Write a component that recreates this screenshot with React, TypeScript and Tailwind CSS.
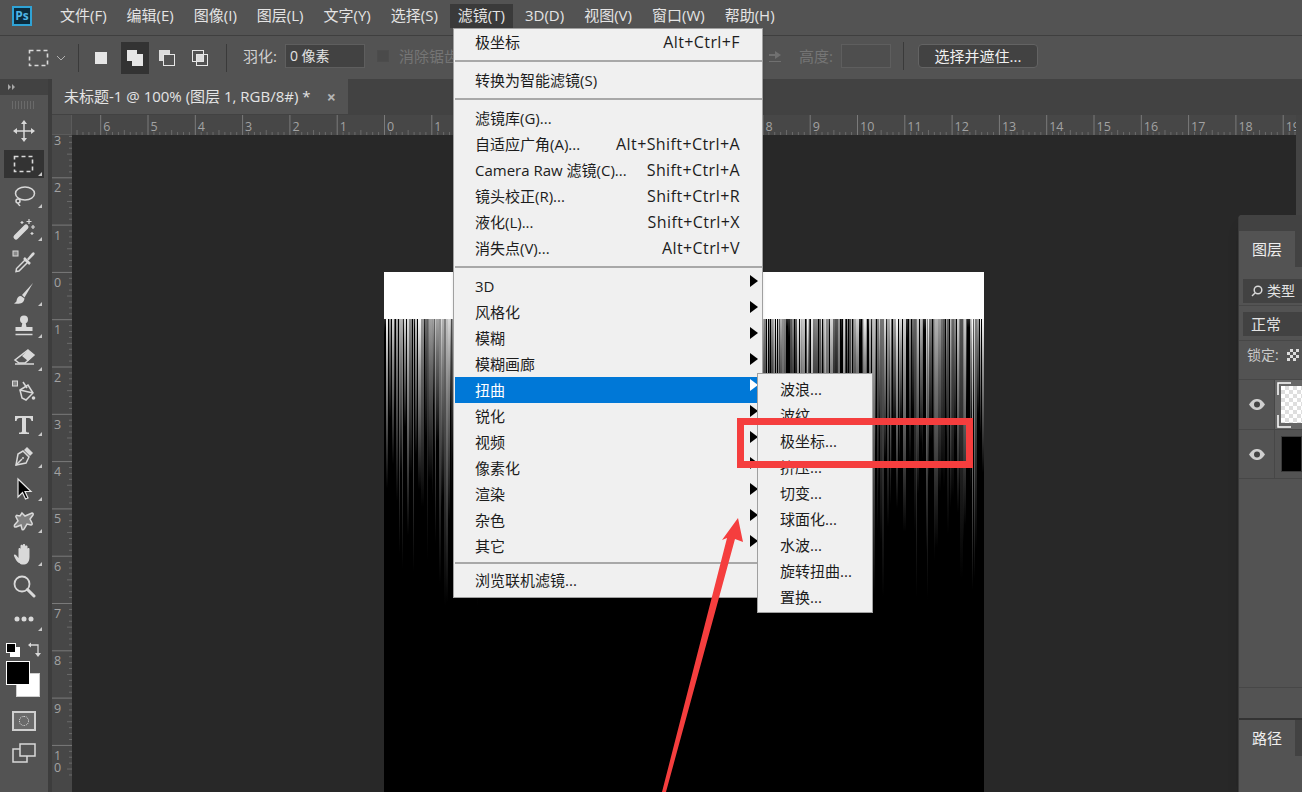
import React from "react";

const menuTop = [
  { t: "文件(F)" }, { t: "编辑(E)" }, { t: "图像(I)" }, { t: "图层(L)" }, { t: "文字(Y)" }, { t: "选择(S)" },
  { t: "滤镜(T)", on: true }, { t: "3D(D)" }, { t: "视图(V)" }, { t: "窗口(W)" }, { t: "帮助(H)" },
];

type Row = { t?: string; k?: string; sub?: boolean; on?: boolean; sep?: "lg" | "sm" };
const filterMenu: Row[] = [
  { t: "极坐标", k: "Alt+Ctrl+F" },
  { sep: "lg" },
  { t: "转换为智能滤镜(S)" },
  { sep: "lg" },
  { t: "滤镜库(G)..." },
  { t: "自适应广角(A)...", k: "Alt+Shift+Ctrl+A" },
  { t: "Camera Raw 滤镜(C)...", k: "Shift+Ctrl+A" },
  { t: "镜头校正(R)...", k: "Shift+Ctrl+R" },
  { t: "液化(L)...", k: "Shift+Ctrl+X" },
  { t: "消失点(V)...", k: "Alt+Ctrl+V" },
  { sep: "lg" },
  { t: "3D", sub: true },
  { t: "风格化", sub: true },
  { t: "模糊", sub: true },
  { t: "模糊画廊", sub: true },
  { t: "扭曲", sub: true, on: true },
  { t: "锐化", sub: true },
  { t: "视频", sub: true },
  { t: "像素化", sub: true },
  { t: "渲染", sub: true },
  { t: "杂色", sub: true },
  { t: "其它", sub: true },
  { sep: "sm" },
  { t: "浏览联机滤镜..." },
];
const distort = ["波浪...", "波纹...", "极坐标...", "挤压...", "切变...", "球面化...", "水波...", "旋转扭曲...", "置换..."];

let seed = 23;
const rnd = () => {
  seed = (seed * 16807) % 2147483647;
  return seed / 2147483647;
};
const streaks: { x: number; w: number; len: number; op: number }[] = [];
for (let x = 0; x < 600; ) {
  const w = 1 + Math.floor(rnd() * 2.4);
  const r = rnd();
  const len = r < 0.1 ? 8 + rnd() * 20 : r < 0.7 ? 80 + rnd() * 110 : 170 + rnd() * 120;
  const op = r < 0.1 ? 0.2 : 0.3 + rnd() * 0.7;
  streaks.push({ x, w, len, op });
  x += w + (rnd() < 0.22 ? 1 : 0);
}

const I = "#d9d9d9";

function Ico({ children, w = 24, h = 24 }: { children: React.ReactNode; w?: number; h?: number }) {
  return (
    <svg width={w} height={h} viewBox={`0 0 ${w} ${h}`} fill="none" stroke={I} strokeWidth="1.5">
      {children}
    </svg>
  );
}

const Marquee = () => (
  <Ico w={22} h={18}>
    <rect x="1.5" y="1.5" width="18" height="15" strokeDasharray="4 3" strokeWidth="1.6" />
  </Ico>
);

const tools: { el: React.ReactNode; on?: boolean; corner?: boolean }[] = [
  {
    el: (
      <Ico>
        <path d="M12 3v18M3 12h18" />
        <path d="M12 1l3 4H9zM12 23l3-4H9zM1 12l4-3v6zM23 12l-4-3v6z" fill={I} stroke="none" />
      </Ico>
    ),
  },
  { el: <Marquee />, on: true, corner: true },
  {
    el: (
      <Ico>
        <ellipse cx="13" cy="9.500" rx="9.500" ry="6.500" />
        <circle cx="6" cy="17" r="2" />
        <path d="M6 19c0 1.500 1.500 2 2 3" />
      </Ico>
    ),
    corner: true,
  },
  {
    el: (
      <Ico>
        <path d="M4 20L14 10" strokeWidth="5" strokeLinecap="round" />
        <path d="M17 2v5M14.500 4.500h5M21 8v4M19 10h4M10 4v3M8.500 5.500h3M20 15v3M18.500 16.500h3" strokeWidth="1.200" />
      </Ico>
    ),
    corner: true,
  },
  {
    el: (
      <svg width="24" height="24" viewBox="0 0 24 24" fill="none" stroke={I} strokeWidth="1.500">
        <rect x="1" y="2" width="5" height="5" strokeWidth="1" fill="#8a8a8a" />
        <path d="M7 22l-3 .5.5-3L13 11l2.500 2.500z" />
        <path d="M12 9l6 6" strokeWidth="2.500" />
        <path d="M15 10l5-6c1-1 2-1 2.500 0s0 1.500-1 2.500l-5 5z" fill={I} stroke="none" />
      </svg>
    ),
  },
  {
    el: (
      <Ico>
        <path d="M21 1L10 13l2.500 2.500z" fill={I} stroke="none" />
        <path d="M9 14c-3 0-4 2-4.500 5-.2 1-1 1.500-2.500 2.500 5 1 10 0 10.500-5z" fill={I} stroke="none" />
      </Ico>
    ),
    corner: true,
  },
  {
    el: (
      <Ico>
        <circle cx="12" cy="5.500" r="4" fill={I} stroke="none" />
        <path d="M10.500 8h3l1 5h6v4H3.500v-4h6z" fill={I} stroke="none" />
        <path d="M3.500 20.500h17" />
      </Ico>
    ),
    corner: true,
  },
  {
    el: (
      <Ico>
        <path d="M16 3l6 5-9 8H7l-4-3z" />
        <path d="M16 3l6 5-6 6-6-5z" fill={I} stroke="none" />
        <path d="M3 17h19" />
      </Ico>
    ),
    corner: true,
  },
  {
    el: (
      <Ico>
        <rect x="0.500" y="2" width="5" height="5" strokeWidth="1" fill="#8a8a8a" />
        <path d="M8 11l8-5 5 8-7 7-4-2z" />
        <path d="M8 11l13 3" />
        <path d="M11 3l4 6" />
        <circle cx="21.500" cy="19" r="1.800" fill={I} stroke="none" />
      </Ico>
    ),
  },
  {
    el: (
      <Ico>
        <path d="M3 4h18v5h-1.500c-.5-2-1-3-3-3H14v13c0 1 1 1.500 3 1.500V22H7v-1.500c2 0 3-.5 3-1.500V6H7.500c-2 0-2.500 1-3 3H3z" fill={I} stroke="none" />
      </Ico>
    ),
    corner: true,
  },
  {
    el: (
      <Ico>
        <path d="M15 3l6 6-3 3-6-6z" fill={I} stroke="none" />
        <path d="M11 7l6 6-3 6-10 2 2-11z" />
        <path d="M4 21l6-6" />
        <circle cx="11" cy="14" r="1" fill={I} stroke="none" />
      </Ico>
    ),
    corner: true,
  },
  {
    el: (
      <svg width="24" height="24" viewBox="0 0 24 24">
        <path d="M6 2v18l4.500-4.500 3 6.500 2.500-1-3-6.500H19z" fill="#000" stroke="#e5e5e5" strokeWidth="1.200" />
      </svg>
    ),
    corner: true,
  },
  {
    el: (
      <Ico>
        <path d="M10 4l3 3 7-3c1 0 1.500 1 1 2l-3 4 2 4c.5 1 0 2-1 2l-4-1-3 5c-.5 1-2 1-2 0l-1-4-5 2c-1.500.5-2-1-1.500-2L6 12 4 8c-.5-1 .5-2 1.500-1.500L8 7z" fill="#808080" />
      </Ico>
    ),
    corner: true,
  },
  {
    el: (
      <svg width="24" height="24" viewBox="0 0 24 24" fill={I}>
        <path d="M7 21c-2-1-3-3-5-7-.5-1.500 1-2 2-1l2.500 3V7c0-1.500 2-1.500 2 0V3.800c0-1.500 2.300-1.500 2.300 0v-.6c0-1.500 2.400-1.500 2.400 0v1.300c0-1.400 2.300-1.400 2.300 0V7c0-1.300 2-1.300 2 0v8c0 3-1 5-2 6-2 2-7 2-8 0z" />
      </svg>
    ),
    corner: true,
  },
  {
    el: (
      <Ico>
        <circle cx="10" cy="10" r="7.500" strokeWidth="1.800" />
        <path d="M15.500 15.500L22 22" strokeWidth="3" strokeLinecap="round" />
      </Ico>
    ),
  },
  {
    el: (
      <svg width="24" height="24" viewBox="0 0 24 24" fill={I}>
        <circle cx="5" cy="12" r="2.500" />
        <circle cx="12" cy="12" r="2.500" />
        <circle cx="19" cy="12" r="2.500" />
      </svg>
    ),
    corner: true,
  },
];

function Arrow({ white }: { white?: boolean }) {
  return (
    <svg width="8" height="12" viewBox="0 0 8 12" className="absolute right-1 top-0.5">
      <path d="M0 0l8 6-8 6z" fill={white ? "#fff" : "#000"} />
    </svg>
  );
}

const rulerFont = "Open Sans, sans-serif";

function TopRuler() {
  // numbers 2-7 lie under the open menu, so only the visible ones are written
  const nums = Array.from({ length: 26 }, (_, i) => i - 6).filter((n) => n < 2 || n > 7);
  const ticks = Array.from({ length: 215 }, (_, i) => i - 52);
  return (
    <svg className="h-5 flex-1" height="20" viewBox="0 0 1224 20" preserveAspectRatio="xMinYMin slice">
      {ticks.map((i) => {
        const x = 312 + (i * 47.3) / 8;
        const major = i % 8 === 0;
        const mid = i % 4 === 0;
        return <rect key={i} x={x} y={major ? 0 : mid ? 15 : 17} width="1" height={major ? 20 : mid ? 5 : 3} fill={major ? "#7a7a7a" : "#6a6a6a"} />;
      })}
      {nums.map((n) => (
        <text key={n} x={312 + n * 47.3 + 3} y="16" fontSize="12.500" fill="#a2a2a2" fontFamily={rulerFont}>
          {Math.abs(n)}
        </text>
      ))}
    </svg>
  );
}

function LeftRuler() {
  const rows = [3, 2, 1, 0, 1, 2, 3, 4, 5, 6, 7, 8, 9, 10];
  const ticks = Array.from({ length: 110 }, (_, i) => i);
  return (
    <svg width="20" height="657" viewBox="0 0 20 657" className="shrink-0">
      {ticks.map((i) => {
        const y = (i * 47.3) / 8 - 5;
        const major = i % 8 === 0;
        const mid = i % 4 === 0;
        return <rect key={i} x={major ? 0 : mid ? 15 : 17} y={y} width={major ? 20 : mid ? 5 : 3} height="1" fill={major ? "#7a7a7a" : "#6a6a6a"} />;
      })}
      {rows.map((n, i) =>
        n === 10 ? (
          <g key={i}>
            <text x="2" y={i * 47.3 + 10} fontSize="12.500" fill="#a2a2a2" fontFamily={rulerFont}>1</text>
            <text x="2" y={i * 47.3 + 22} fontSize="12.500" fill="#a2a2a2" fontFamily={rulerFont}>0</text>
          </g>
        ) : (
          <text key={i} x="2" y={i * 47.3 + 10} fontSize="12.500" fill="#a2a2a2" fontFamily={rulerFont}>{n}</text>
        )
      )}
    </svg>
  );
}

function Eye() {
  return (
    <svg width="16" height="11" viewBox="0 0 16 11">
      <path d="M0 5.500C3 1 5.500 0 8 0s5 1 8 5.500C13 10 10.500 11 8 11S3 10 0 5.500z" fill="#cfcfcf" />
      <circle cx="8" cy="5.500" r="3" fill="#444" />
    </svg>
  );
}

export default function App() {
  return (
    <div className="relative flex h-screen flex-col overflow-hidden bg-[#535353] font-['Open_Sans','Noto_Sans_CJK_SC',sans-serif] text-[15px] text-[#e4e4e4]">
      {/* menu bar */}
      <div className="flex h-9 shrink-0 items-center border-b border-[#3f3f3f] pb-1">
        <div className="ml-3 mr-5 flex h-5 w-5 items-center justify-center border-2 border-[#2fa3d6] bg-[#0b2b3d] text-xs font-bold leading-none text-[#4fb6e6]">
          Ps
        </div>
        <div className="flex gap-1">
          {menuTop.map((m) => (
            <span key={m.t} className={`flex h-6 items-center px-2 ${m.on ? "bg-[#3a3a3a]" : ""}`}>
              {m.t}
            </span>
          ))}
        </div>
      </div>

      {/* options bar */}
      <div className="-mb-px flex h-11 shrink-0 items-center bg-[#535353]">
        <div className="ml-7 flex items-center">
          <Marquee />
        </div>
        <svg width="10" height="6" viewBox="0 0 10 6" fill="none" stroke="#b0b0b0" className="ml-1.5">
          <path d="M1 1l4 4 4-4" />
        </svg>
        <div className="ml-3 h-7 w-px bg-[#3a3a3a]" />
        <div className="ml-1.5 flex h-8 w-8 items-center justify-center">
          <div className="h-3 w-3 bg-[#e6e6e6]" />
        </div>
        <div className="ml-1 flex h-8 w-7 items-center justify-center bg-[#333333]">
          <svg width="18" height="18" viewBox="0 0 18 18" fill="#e6e6e6">
            <path d="M1 1h10v4h6v12H6v-5H1z" />
          </svg>
        </div>
        <div className="ml-0.5 flex h-8 w-8 items-center justify-center">
          <svg width="18" height="18" viewBox="0 0 18 18">
            <rect x="1" y="1" width="11" height="11" fill="#dcdcdc" />
            <rect x="5.500" y="5.500" width="11" height="11" fill="#535353" stroke="#e6e6e6" />
          </svg>
        </div>
        <div className="ml-px flex h-8 w-8 items-center justify-center">
          <svg width="18" height="18" viewBox="0 0 18 18" fill="none" stroke="#e6e6e6">
            <rect x="1.500" y="1.500" width="11" height="11" />
            <rect x="5.500" y="5.500" width="11" height="11" />
            <rect x="5.500" y="5.500" width="7" height="7" fill="#dcdcdc" />
          </svg>
        </div>
        <div className="ml-2.5 h-7 w-px bg-[#3a3a3a]" />
        <span className="mb-1 ml-4 text-[#d0d0d0]">羽化:</span>
        <div className="mb-1 ml-2 flex h-6 w-20 items-center border border-[#5e5e5e] bg-[#424242] px-1 text-sm text-[#e4e4e4]">0 像素</div>
        <div className="mb-1 ml-3 h-3 w-3 border border-[#4c4c4c] bg-[#4a4a4a]" />
        <span className="mb-1 ml-2.5 text-[#757575]">消除锯齿</span>
        <div className="flex-1" />
        <svg width="14" height="14" viewBox="0 0 14 14" fill="#707070" className="mb-1 mr-4">
          <path d="M0 5h6V2l6 4-6 4V7H0zM0 12h12v1H0z" />
        </svg>
        <span className="mb-1 text-[#757575]">高度:</span>
        <div className="mb-1 ml-2 h-6 w-12.5 border border-[#5e5e5e] bg-[#4e4e4e]" />
        <div className="mb-1 ml-3 h-7 w-px bg-[#3a3a3a]" />
        <div className="mb-1 ml-3.5 flex h-6 w-30 items-center justify-center rounded-sm border border-[#636363] bg-[#424242] text-[#f0f0f0]">
          选择并遮住...
        </div>
        <div className="w-66" />
      </div>

      <div className="flex min-h-0 flex-1">
        {/* tool column */}
        <div className="flex w-13 shrink-0 flex-col border-r-4 border-[#3d3d3d]">
          <div className="flex h-4 items-center bg-[#424242] pl-2 text-[#9a9a9a]">
            <svg width="8" height="6" viewBox="0 0 8 6" fill="#a8a8a8">
              <path d="M0 0l3 3-3 3zM4 0l3 3-3 3z" />
            </svg>
          </div>
          <div className="flex h-5 items-center justify-center">
            <div className="h-2 w-6 bg-[repeating-linear-gradient(90deg,#6a6a6a_0_1px,transparent_1px_3px)]" />
          </div>
          <div className="flex h-130 flex-col items-center justify-between">
            {tools.map((t, i) => (
              <div key={i} className="relative flex h-8 w-10 items-center justify-center">
                {t.on && <div className="absolute inset-x-0 inset-y-0.5 bg-[#333333]" />}
                <div className="relative flex">{t.el}</div>
                {t.corner && <div className="absolute bottom-1 right-0.5 h-0 w-0 border-b-4 border-l-4 border-b-[#c8c8c8] border-l-transparent" />}
              </div>
            ))}
          </div>
          {/* colours */}
          <div className="relative mt-1.5 h-16">
            <div className="absolute left-2.5 top-1.5 h-2.5 w-2.5 bg-white" />
            <div className="absolute left-1.5 top-0.5 h-2.5 w-2.5 border border-white bg-black" />
            <svg width="14" height="16" viewBox="0 0 14 16" fill="none" stroke="#d8d8d8" strokeWidth="1.300" className="absolute left-7 top-0">
              <path d="M2 4h8v8" />
              <path d="M0 4l3-2.500v5zM10 16l-3-4h6z" fill="#d8d8d8" stroke="none" />
            </svg>
            <div className="absolute left-4 top-8 h-6 w-6 border border-[#cfcfcf] bg-white" />
            <div className="absolute left-1.5 top-5 h-6 w-6 border border-white bg-black" />
          </div>
          <div className="flex h-8 flex-col items-center justify-center">
            <div className="flex h-5 w-6 items-center justify-center border-2 border-[#cfcfcf] bg-[#6a6a6a]">
              <div className="h-2.5 w-2.5 rounded-full border border-dotted border-[#e5e5e5]" />
            </div>
          </div>
          <div className="relative flex h-8 items-center justify-center">
            <svg width="24" height="20" viewBox="0 0 24 20" fill="none" stroke="#d8d8d8" strokeWidth="1.500">
              <rect x="1" y="6" width="14" height="13" />
              <rect x="8" y="1" width="15" height="12" fill="#535353" />
            </svg>
          </div>
        </div>

        {/* document area */}
        <div className="flex min-w-0 flex-1 flex-col">
          <div className="flex h-9 shrink-0 bg-[#424242]">
            <div className="flex h-full w-74 items-center justify-between border-b border-[#424242] bg-[#535353] pl-3 pr-3">
              <span className="whitespace-nowrap">未标题-1 @ 100% (图层 1, RGB/8#) *</span>
              <span className="text-base font-bold leading-none text-[#b5b5b5]">×</span>
            </div>
          </div>
          <div className="flex min-h-0 flex-1">
            <div className="flex min-w-0 flex-1 flex-col">
              <div className="flex h-5 shrink-0 bg-[#474747]">
                <div className="h-5 w-5 border-b border-r border-[#5b5b5b] bg-[#4f4f4f]" />
                <TopRuler />
              </div>
              <div className="flex min-h-0 flex-1">
                <div className="w-5 shrink-0 overflow-hidden bg-[#474747]">
                  <LeftRuler />
                </div>
                <div className="relative min-w-0 flex-1 overflow-hidden bg-[#282828]">
                  <div className="absolute left-78 top-[137px] h-130 w-150 bg-black">
                    <svg width="600" height="520" viewBox="0 0 600 520">
                      <defs>
                        <linearGradient id="fade" x1="0" y1="0" x2="0" y2="1">
                          <stop offset="0" stopColor="#fff" />
                          <stop offset="0.3" stopColor="#a0a0a0" />
                          <stop offset="1" stopColor="#000" />
                        </linearGradient>
                      </defs>
                      <rect width="600" height="47" fill="#fff" />
                      {streaks.map((s) => (
                        <rect key={s.x} x={s.x} y="46" width={s.w} height={s.len} fill="url(#fade)" opacity={s.op} />
                      ))}
                    </svg>
                  </div>
                </div>
              </div>
            </div>
            <div className="w-1.5 shrink-0 bg-[#444444]" />
          </div>
        </div>
      </div>

      {/* layers panel */}
      <div className="absolute bottom-0 right-0 top-[215px] flex w-16 flex-col overflow-hidden rounded-tl-sm border-l border-[#3a3a3a] bg-[#535353] shadow-lg">
        <div className="h-4 shrink-0 bg-[#424242]" />
        <div className="flex h-9 shrink-0 bg-[#424242]">
          <div className="flex w-14 shrink-0 items-center justify-center bg-[#535353] text-[#eeeeee]">图层</div>
        </div>
        <div className="ml-1 mt-3 flex h-6 shrink-0 items-center gap-1 whitespace-nowrap bg-[#424242] pl-2 text-sm">
          <svg width="12" height="12" viewBox="0 0 12 12" fill="none" stroke="#d8d8d8" strokeWidth="1.500" className="shrink-0">
            <circle cx="7" cy="5" r="3.800" />
            <path d="M4 8l-3 3" />
          </svg>
          类型
        </div>
        <div className="mt-0.5 h-px shrink-0 bg-[#474747]" />
        <div className="ml-1 mt-1.5 flex h-6 shrink-0 items-center bg-[#424242] pl-2">正常</div>
        <div className="mt-1 h-px shrink-0 bg-[#474747]" />
        <div className="mt-1 flex h-5 shrink-0 items-center gap-2 whitespace-nowrap pl-2 text-sm text-[#c8c8c8]">
          锁定:
          <div className="h-3 w-3 shrink-0 bg-[conic-gradient(#ddd_25%,#555_0_50%,#ddd_0_75%,#555_0)] bg-size-[6px_6px]" />
        </div>
        <div className="mt-3.5 flex h-12.5 shrink-0 border-t border-[#474747]">
          <div className="flex w-9 shrink-0 items-center justify-center border-r border-[#474747]">
            <Eye />
          </div>
          <div className="relative flex-1 bg-[#666666] py-1.5 pl-1.5">
            <div className="h-full bg-[repeating-conic-gradient(#dedede_0_25%,#fff_0_50%)] bg-size-[8px_8px]" />
            <svg width="20" height="46" viewBox="0 0 20 46" fill="none" stroke="#fff" strokeWidth="1.500" className="absolute left-0.5 top-0.5">
              <path d="M14 1H1v12M14 45H1V33" />
            </svg>
          </div>
        </div>
        <div className="flex h-12.5 shrink-0 border-y border-[#474747]">
          <div className="flex w-9 shrink-0 items-center justify-center border-r border-[#474747]">
            <Eye />
          </div>
          <div className="flex-1 py-1.5 pl-1.5">
            <div className="h-full border border-[#3a3a3a] bg-black" />
          </div>
        </div>
        <div className="mt-52 h-px shrink-0 bg-[#474747]" />
        <div className="mt-7.5 h-0.5 shrink-0 bg-[#333333]" />
        <div className="flex h-9 shrink-0 bg-[#424242]">
          <div className="flex w-14 shrink-0 items-center justify-center bg-[#535353] text-[#eeeeee]">路径</div>
        </div>
        <div className="flex-1 bg-[#535353]" />
      </div>

      {/* filter menu */}
      <div className="absolute left-[453px] top-7 w-[310px] border border-[#a0a0a0] bg-[#f0f0f0] pb-1 pl-px text-[#1c1c1c] shadow-sm">
        {filterMenu.map((r, i) =>
          r.sep ? (
            <div key={i} className={`flex items-center ${r.sep === "lg" ? "h-3" : "h-2"}`}>
              <div className="h-0.5 w-full bg-[#a8a8a8]" />
            </div>
          ) : (
            <div key={i} className={`relative flex h-6.5 items-center justify-between pl-5 pr-5.5 ${r.on ? "bg-[#0078d7] text-white" : ""}`}>
              <span className="whitespace-nowrap">{r.t}</span>
              {r.k && <span className="whitespace-nowrap text-base tracking-wide">{r.k}</span>}
              {r.sub && <Arrow white={r.on} />}
            </div>
          )
        )}
      </div>

      {/* submenu */}
      <div className="absolute left-[757px] top-[373px] w-29 border border-[#a0a0a0] bg-[#f0f0f0] py-0.5 pl-5.5 text-[#1c1c1c]">
        {distort.map((d) => (
          <div key={d} className="flex h-6.5 items-center whitespace-nowrap">
            {d}
          </div>
        ))}
      </div>

      {/* annotations */}
      <div className="absolute left-[737px] top-[418px] h-12.5 w-59 border-[7px] border-[#f53e3e]" />
      <svg className="absolute left-[650px] top-[510px]" width="100" height="282" viewBox="0 0 100 282">
        <path d="M12 282L77 28l-5 2L88 8l5 24-8-3L16 282z" fill="#f53e3e" />
      </svg>
    </div>
  );
}
